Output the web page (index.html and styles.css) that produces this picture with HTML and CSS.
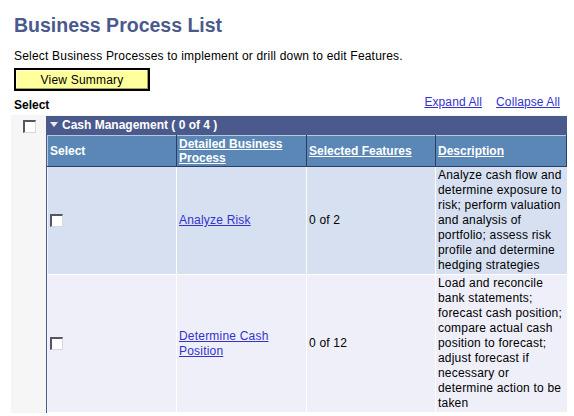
FILE: index.html
```html
<!DOCTYPE html>
<html lang="en">
<head>
  <meta charset="UTF-8">
  <title>Business Process List</title>
  <link rel="stylesheet" href="styles.css">
</head>
<body>
  <h1 class="page-title">Business Process List</h1>
  <p class="intro">Select Business Processes to implement or drill down to edit Features.</p>
  <button type="button" class="summary-btn">View Summary</button>

  <div class="toolbar">
    <span class="select-label">Select</span>
    <div class="toolbar-links">
      <a href="#">Expand All</a>
      <a href="#">Collapse All</a>
    </div>
  </div>

  <!-- one group per module -->
  <div class="group">
    <div class="group-check"><span class="check"></span></div>
    <div class="group-body">
      <div class="group-head"><span class="caret"></span>Cash Management ( 0 of 4 )</div>
      <table class="grid">
        <colgroup>
          <col class="c1"><col class="c2"><col class="c3"><col class="c4">
        </colgroup>
        <thead>
          <tr>
            <th>Select</th>
            <th><a href="#">Detailed Business Process</a></th>
            <th><a href="#">Selected Features</a></th>
            <th><a href="#">Description</a></th>
          </tr>
        </thead>
        <tbody>
          <tr class="odd">
            <td><span class="check"></span></td>
            <td><a href="#">Analyze Risk</a></td>
            <td>0 of 2</td>
            <td>Analyze cash flow and determine exposure to risk; perform valuation and analysis of portfolio; assess risk profile and determine hedging strategies</td>
          </tr>
          <tr class="even">
            <td><span class="check"></span></td>
            <td><a href="#">Determine Cash Position</a></td>
            <td>0 of 12</td>
            <td>Load and reconcile bank statements; forecast cash position; compare actual cash position to forecast; adjust forecast if necessary or determine action to be taken</td>
          </tr>
        </tbody>
      </table>
    </div>
  </div>
</body>
</html>
```

FILE: styles.css
```css
body {
  margin: 0;
  padding: 0 0 0 14px;
  background: #ffffff;
  font-family: "Liberation Sans", Arial, sans-serif;
  font-size: 12px;
  color: #000000;
}

a {
  color: #3333cc;
}

.page-title {
  margin: 0;
  padding-top: 13px;
  font-size: 19.5px;
  line-height: 25px;
  font-weight: bold;
  color: #4b5a8c;
}

.intro {
  margin: 11px 0 0 0;
  line-height: 15px;
  letter-spacing: 0.2px;
}

.summary-btn {
  display: block;
  margin-top: 4px;
  width: 136px;
  height: 23px;
  padding: 0;
  background: #ffff9c;
  border: 2px solid #000000;
  box-shadow: inset -1px -1px 0 #a0a060, inset 1px 1px 0 #ffffe0;
  font-family: "Liberation Sans", Arial, sans-serif;
  font-size: 12px;
  letter-spacing: 0.2px;
  color: #000000;
}

.toolbar {
  display: flex;
  justify-content: space-between;
  align-items: flex-end;
  margin-top: 4px;
  width: 546px;
  height: 15px;
}

.select-label {
  font-weight: bold;
  line-height: 15px;
  position: relative;
  top: 3px;
}

.toolbar-links {
  display: flex;
  gap: 14px;
}

.toolbar-links a {
  line-height: 15px;
  letter-spacing: 0.1px;
}

.group {
  display: flex;
  margin: 5px 0 0 -3px;
  width: 556px;
  background: #f6f6f6;
  padding-top: 1px;
}

.group-check {
  width: 36px;
  padding-top: 3px;
}

.group-check .check {
  margin-left: 12px;
}

.group-body {
  width: 519px;
  border-left: 1px solid #4b5a8c;
  border-right: 1px solid #4b5a8c;
}

.group-head {
  height: 19px;
  line-height: 19px;
  background: #4b5a8c;
  color: #ffffff;
  font-weight: bold;
  font-size: 12px;
  padding-left: 3px;
}

.caret {
  display: inline-block;
  width: 0;
  height: 0;
  border-left: 4px solid transparent;
  border-right: 4px solid transparent;
  border-top: 5px solid #e8ecf4;
  margin-right: 4px;
  vertical-align: 2px;
}

.grid {
  width: 100%;
  border-collapse: collapse;
  table-layout: fixed;
}

.grid .c1 { width: 129px; }
.grid .c2 { width: 130px; }
.grid .c3 { width: 129px; }
.grid .c4 { width: 131px; }

.grid th {
  background: #5a87b6;
  color: #ffffff;
  font-weight: bold;
  text-align: left;
  vertical-align: middle;
  height: 30px;
  padding: 0 2px;
  line-height: 14px;
  border-top: 1px solid #b8c8dc;
  border-left: 1px solid #b8c8dc;
  border-right: 1px solid #2e3d66;
  border-bottom: 1px solid #2e3d66;
}

.grid th a {
  color: #ffffff;
}

.grid td {
  padding: 1px 2px;
  line-height: 15px;
  letter-spacing: 0.2px;
  vertical-align: middle;
  border: 1px solid #ffffff;
}

.grid td:first-child {
  border-left: none;
}

.grid td:last-child {
  border-right: none;
}

.grid tr.odd td {
  background: #d6e0f1;
}

.grid tr.even td {
  background: #eeeff8;
}

.check {
  display: inline-block;
  box-sizing: border-box;
  width: 13px;
  height: 13px;
  background: #ffffff;
  border-top: 2px solid #555566;
  border-left: 2px solid #555566;
  border-right: 1px solid #d8d8d8;
  border-bottom: 1px solid #d8d8d8;
  vertical-align: middle;
}
```
